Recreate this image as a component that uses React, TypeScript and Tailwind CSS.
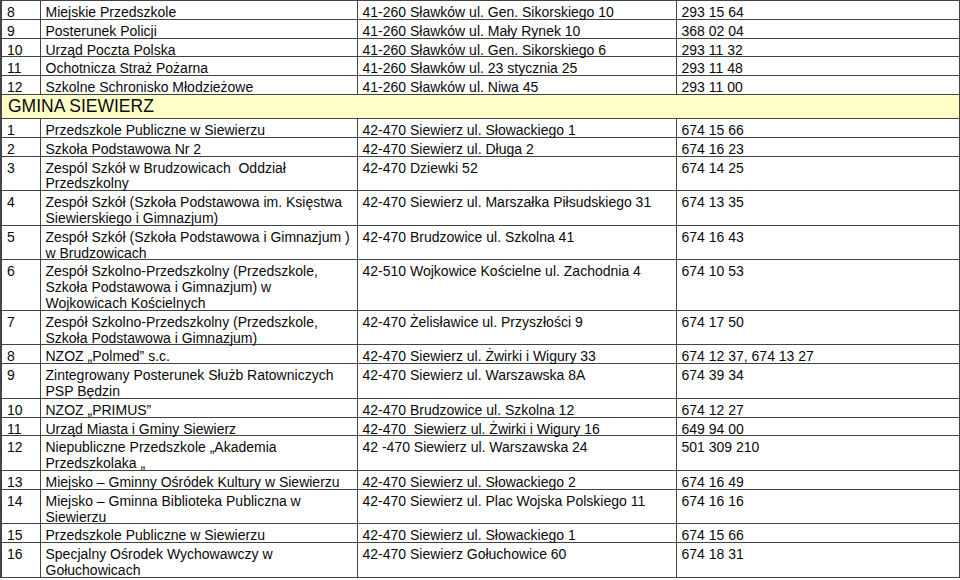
type Row = { no: string; name: string; addr: string; phone: string }

const slawkow: Row[] = [
  { no: '8', name: 'Miejskie Przedszkole', addr: '41-260 Sławków ul. Gen. Sikorskiego 10', phone: '293 15 64' },
  { no: '9', name: 'Posterunek Policji', addr: '41-260 Sławków ul. Mały Rynek 10', phone: '368 02 04' },
  { no: '10', name: 'Urząd Poczta Polska', addr: '41-260 Sławków ul. Gen. Sikorskiego 6', phone: '293 11 32' },
  { no: '11', name: 'Ochotnicza Straż Pożarna', addr: '41-260 Sławków ul. 23 stycznia 25', phone: '293 11 48' },
  { no: '12', name: 'Szkolne Schronisko Młodzieżowe', addr: '41-260 Sławków ul. Niwa 45', phone: '293 11 00' },
]

// line breaks in names are written as \n, like in the source document
const siewierz: Row[] = [
  { no: '1', name: 'Przedszkole Publiczne w Siewierzu', addr: '42-470 Siewierz ul. Słowackiego 1', phone: '674 15 66' },
  { no: '2', name: 'Szkoła Podstawowa Nr 2', addr: '42-470 Siewierz ul. Długa 2', phone: '674 16 23' },
  { no: '3', name: 'Zespól Szkół w Brudzowicach  Oddział\nPrzedszkolny', addr: '42-470 Dziewki 52', phone: '674 14 25' },
  { no: '4', name: 'Zespół Szkół (Szkoła Podstawowa im. Księstwa\nSiewierskiego i Gimnazjum)', addr: '42-470 Siewierz ul. Marszałka Piłsudskiego 31', phone: '674 13 35' },
  { no: '5', name: 'Zespół Szkół (Szkoła Podstawowa i Gimnazjum )\nw Brudzowicach', addr: '42-470 Brudzowice ul. Szkolna 41', phone: '674 16 43' },
  { no: '6', name: 'Zespół Szkolno-Przedszkolny (Przedszkole,\nSzkoła Podstawowa i Gimnazjum) w\nWojkowicach Kościelnych', addr: '42-510 Wojkowice Kościelne ul. Zachodnia 4', phone: '674 10 53' },
  { no: '7', name: 'Zespół Szkolno-Przedszkolny (Przedszkole,\nSzkoła Podstawowa i Gimnazjum)', addr: '42-470 Żelisławice ul. Przyszłości 9', phone: '674 17 50' },
  { no: '8', name: 'NZOZ „Polmed” s.c.', addr: '42-470 Siewierz ul. Żwirki i Wigury 33', phone: '674 12 37, 674 13 27' },
  { no: '9', name: 'Zintegrowany Posterunek Służb Ratowniczych\nPSP Będzin', addr: '42-470 Siewierz ul. Warszawska 8A', phone: '674 39 34' },
  { no: '10', name: 'NZOZ „PRIMUS”', addr: '42-470 Brudzowice ul. Szkolna 12', phone: '674 12 27' },
  { no: '11', name: 'Urząd Miasta i Gminy Siewierz', addr: '42-470  Siewierz ul. Żwirki i Wigury 16', phone: '649 94 00' },
  { no: '12', name: 'Niepubliczne Przedszkole „Akademia\nPrzedszkolaka „', addr: '42 -470 Siewierz ul. Warszawska 24', phone: '501 309 210' },
  { no: '13', name: 'Miejsko – Gminny Ośródek Kultury w Siewierzu', addr: '42-470 Siewierz ul. Słowackiego 2', phone: '674 16 49' },
  { no: '14', name: 'Miejsko – Gminna Biblioteka Publiczna w\nSiewierzu', addr: '42-470 Siewierz ul. Plac Wojska Polskiego 11', phone: '674 16 16' },
  { no: '15', name: 'Przedszkole Publiczne w Siewierzu', addr: '42-470 Siewierz ul. Słowackiego 1', phone: '674 15 66' },
  { no: '16', name: 'Specjalny Ośrodek Wychowawczy w\nGołuchowicach', addr: '42-470 Siewierz Gołuchowice 60', phone: '674 18 31' },
]

const cell = 'border border-[#444] align-top pl-[5px] pt-[2px] pb-0 whitespace-pre leading-[15.8px]'

// text sits a little low in the cells of the scanned document
function Txt({ children }: { children: string }) {
  return <span className="relative top-[2px]">{children}</span>
}

function TableRow({ row }: { row: Row }) {
  return (
    <tr>
      <td className={`${cell} border-l-2`}><Txt>{row.no}</Txt></td>
      <td className={cell}><Txt>{row.name}</Txt></td>
      <td className={cell}><Txt>{row.addr}</Txt></td>
      <td className={cell}><Txt>{row.phone}</Txt></td>
    </tr>
  )
}

export default function App() {
  return (
    <div className="w-[960px] h-[580px] overflow-hidden bg-white text-[#0a0a0a] text-[14px] font-['Liberation_Sans',Arial,sans-serif]">
      <table className="w-[958px] table-fixed border-collapse">
        <colgroup>
          <col className="w-[39px]" />
          <col className="w-[317px]" />
          <col className="w-[319px]" />
          <col className="w-[283px]" />
        </colgroup>
        <tbody>
          {slawkow.map((r) => (
            <TableRow key={'s' + r.no} row={r} />
          ))}
          <tr>
            <td
              colSpan={4}
              className="border border-[#444] border-l-2 bg-[#ffffc8] pl-[6px] h-[24px] text-[17.5px] leading-[20px] align-middle"
            >
              GMINA SIEWIERZ
            </td>
          </tr>
          {siewierz.map((r) => (
            <TableRow key={'g' + r.no} row={r} />
          ))}
        </tbody>
      </table>
    </div>
  )
}
